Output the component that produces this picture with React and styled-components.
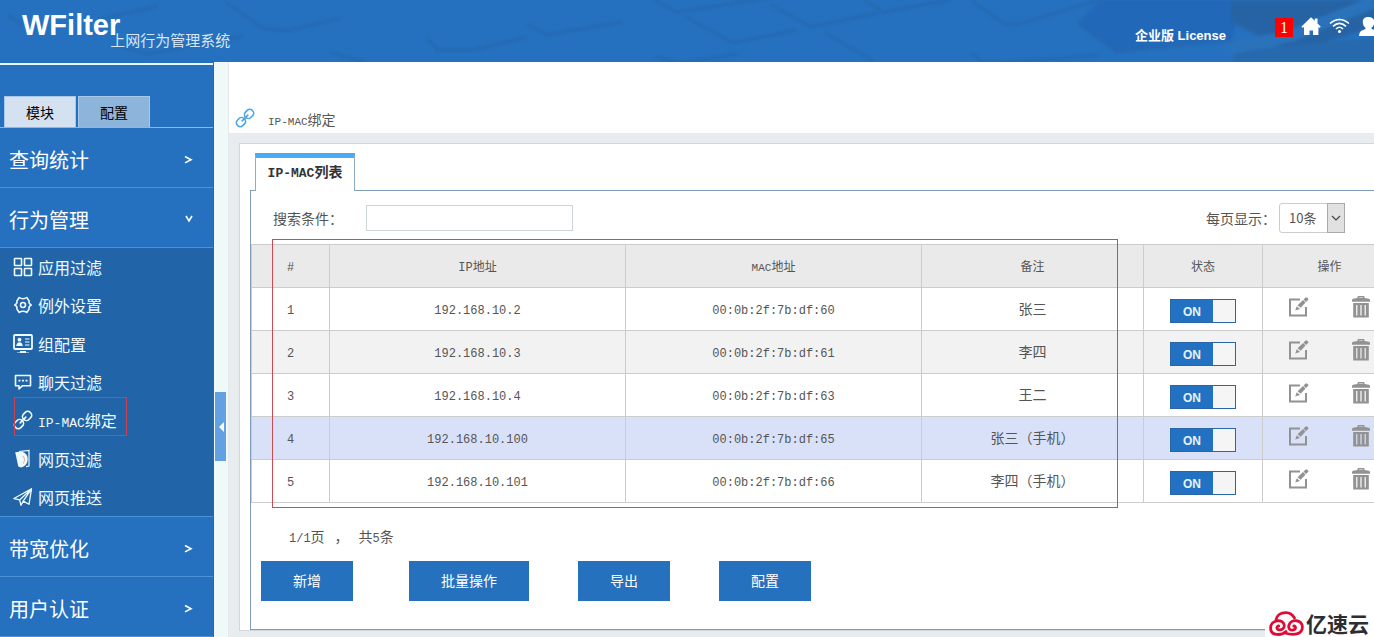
import React from "react";
import styled, { createGlobalStyle } from "styled-components";

const GlobalStyle = createGlobalStyle`
  *, *::before, *::after { box-sizing: border-box; }
  body {
    margin: 0;
    overflow-x: hidden;
    background: #e9ecef;
    color: #555;
    font-family: "Noto Sans CJK SC", sans-serif;
    font-size: 14px;
    line-height: 20px;
  }
  button, input, select { font: inherit; color: inherit; }
  svg { display: block; flex: none; }
`;

/* The console is slightly wider than the window; the excess is clipped. */
const Clip = styled.div`
  position: relative;
  overflow: hidden;
`;

const Page = styled.div`
  display: flex;
  flex-direction: column;
  width: calc(100% + 35px);
  min-height: 100vh;
`;

const Latin = styled.span`
  font-family: "Liberation Mono", monospace;
  font-size: ${(p) => p.$size || 12}px;
  line-height: 1;
`;

/* ---------- header ---------- */

const Header = styled.header`
  position: relative;
  display: flex;
  justify-content: space-between;
  height: 62px;
  background: #2571bf;
  overflow: hidden;
  color: #fff;
`;

const HeaderArt = styled.svg`
  position: absolute;
  top: 0;
  left: 0;
`;

const Brand = styled.div`
  position: relative;
  display: flex;
  padding-left: 22px;
`;

const BrandName = styled.h1`
  margin: 0;
  padding-top: 9px;
  font: bold 29px/32px "Liberation Sans", sans-serif;
`;

const BrandNote = styled.span`
  margin-left: -10px;
  padding-top: 30px;
  font-size: 15px;
  color: #d5e6f7;
`;

const HeaderTools = styled.nav`
  position: relative;
  display: flex;
  align-items: flex-start;
  gap: 8px;
  padding: 17px 30px 0 0;

  a { color: #fff; }
`;

const License = styled.a`
  margin: 9px 41px 0 0;
  font: bold 13px/20px "Liberation Sans", "Noto Sans CJK SC", sans-serif;
  text-decoration: none;
`;

const Badge = styled.span`
  width: 18px;
  margin-top: 1px;
  background: #f00;
  text-align: center;
  font: 16px/19px "Liberation Serif", serif;
`;

/* ---------- sidebar ---------- */

const Body = styled.div`
  display: flex;
  flex: 1;
`;

const Sidebar = styled.aside`
  display: flex;
  flex-direction: column;
  flex: none;
  width: 214px;
  background: #2571bf;
  border-right: 1px solid #2067b4;
  color: #fff;
`;

const SideTabs = styled.div`
  display: flex;
  align-items: flex-end;
  gap: 2px;
  height: 65px;
  margin-top: 1px;
  padding-left: 4px;
  border-top: 2px solid #eaf7ff;
  border-bottom: 1px solid #86b9ea;
`;

const SideTab = styled.button`
  width: 72px;
  height: 31px;
  padding: 0;
  border: 1px solid #a9c8e5;
  border-bottom: 0;
  background: ${(p) => (p.$active ? "#d3e1f0" : "#8db4da")};
  color: #000;
`;

const Group = styled.button`
  display: flex;
  align-items: center;
  justify-content: space-between;
  height: 60px;
  padding: 4px 20px 0 9px;
  border: 0;
  border-bottom: 1px solid #4c92d7;
  background: #2571bf;
  color: #fff;
  font-size: 20px;
  line-height: 28px;
`;

const Submenu = styled.ul`
  display: grid;
  grid-auto-rows: 1fr;
  min-height: 269px;
  margin: 0;
  padding: 0;
  border-bottom: 1px solid #4c92d7;
  background: #2165a8;
  list-style: none;
`;

const MenuItem = styled.li`
  position: relative;
`;

const MenuLink = styled.a`
  display: flex;
  align-items: center;
  gap: 5px;
  height: 100%;
  padding: 0 0 0 13px;
  color: #effaff;
  font-size: 16px;
  text-decoration: none;
`;

const MenuMark = styled.span`
  position: absolute;
  inset: -4px 86px 3px 14px;
  border: 1px solid #cf3f52;
  pointer-events: none;
`;

const Gutter = styled.div`
  display: flex;
  flex: none;
  width: 15px;
  padding: 330px 0 0 1px;
  background: #eff9f7;
  border-right: 1px solid #e2eaed;
`;

const Collapse = styled.button`
  display: flex;
  align-items: center;
  justify-content: flex-end;
  width: 11px;
  height: 69px;
  padding: 0 2px 0 0;
  border: 0;
  background: #64a1e2;
`;

/* ---------- content ---------- */

const Main = styled.main`
  flex: 1;
  min-width: 0;
  background: #e9ecef;
`;

const TitleBar = styled.div`
  display: flex;
  align-items: flex-end;
  gap: 13px;
  height: 71px;
  padding: 0 0 5px 6px;
  background: #fff;
`;

const Title = styled.h2`
  margin: 0;
  font-size: 14px;
  line-height: 16px;
  font-weight: 400;
`;

const Card = styled.section`
  margin: 10px 0 0 10px;
  padding: 9px 10px 0;
  border: 1px solid #cfd6dd;
  background: #fff;
`;

const CardTab = styled.button`
  position: relative;
  display: block;
  width: 100px;
  height: 38px;
  margin: 0 0 -1px 5px;
  padding: 0 0 8px;
  border: 1px solid #8fabc6;
  border-top: 5px solid #4aabf3;
  border-bottom: 0;
  background: #fff;
  color: #333;
  font-weight: 700;
`;

const Panel = styled.div`
  padding-bottom: 28px;
  border: 1px solid #7e9db9;
`;

const Filters = styled.div`
  display: flex;
  align-items: center;
  justify-content: space-between;
  height: 53px;
  padding: 0 52px 0 22px;
`;

const Field = styled.div`
  display: flex;
  align-items: center;
`;

const SearchLabel = styled.label`
  width: 93px;
`;

const SearchInput = styled.input`
  width: 207px;
  height: 26px;
  border: 1px solid #ccd6d8;
  background: #fff;
`;

const SelectBox = styled.div`
  position: relative;
  margin-left: 3px;
`;

const Select = styled.select`
  appearance: none;
  display: block;
  width: 66px;
  height: 30px;
  padding: 0 18px 0 9px;
  border: 1px solid #ccc;
  border-radius: 3px;
  background: #fff;
  font-size: 13px;
`;

const SelectArrow = styled.span`
  position: absolute;
  inset: 0 0 0 auto;
  display: grid;
  place-items: center;
  width: 18px;
  border: 1px solid #a9a9a9;
  background: #e1e1e1;
  pointer-events: none;
`;

const TableWrap = styled.div`
  position: relative;
`;

const TableMark = styled.span`
  position: absolute;
  inset: -5px 279px -5px 21px;
  border: 1px solid #cf4a52;
  pointer-events: none;
`;

const Table = styled.table`
  width: 100%;
  table-layout: fixed;
  border-collapse: separate;
  border-spacing: 0;
  border-top: 1px solid #ccc;
  border-left: 1px solid #ccc;
`;

const Th = styled.th`
  width: ${(p) => (p.$w ? `${p.$w}px` : "auto")};
  height: 43px;
  padding: 0;
  border-right: 1px solid #ccc;
  border-bottom: 1px solid #ccc;
  background: #eaeaea;
  font-size: 12px;
  font-weight: 400;
`;

const Row = styled.tr`
  background: ${(p) => (p.$selected ? "#d9e1f9" : "#fff")};
  &:nth-child(even) {
    background: ${(p) => (p.$selected ? "#d9e1f9" : "#f2f2f2")};
  }
`;

const Td = styled.td`
  height: 43px;
  padding: 0 0 2px;
  border-right: 1px solid #ccc;
  border-bottom: 1px solid #ccc;
  text-align: center;
`;

const Toggle = styled.label`
  display: flex;
  width: 66px;
  height: 24px;
  margin: 5px auto 0;
  border: 1px solid #2a66a5;
  background: #f5f5f5;
`;

const ToggleInput = styled.input`
  position: absolute;
  width: 1px;
  height: 1px;
  margin: 0;
  opacity: 0;
`;

const ToggleText = styled.span`
  width: 42px;
  background: #2371c2;
  color: #e8f2fc;
  font: bold 12px/24px "Liberation Sans", sans-serif;
`;

const Actions = styled.div`
  display: flex;
  justify-content: center;
  gap: 43px;
  margin-top: -3px;
`;

const IconButton = styled.button`
  padding: 0;
  border: 0;
  background: none;
  color: #929292;
`;

const Pager = styled.p`
  display: flex;
  gap: 10px;
  height: 58px;
  margin: 0;
  padding: 23px 0 0 38px;
`;

const Buttons = styled.div`
  display: grid;
  grid-template-columns: 148px 169px 141px auto;
  justify-items: start;
  padding-left: 10px;
`;

const Button = styled.button`
  min-width: 92px;
  height: 40px;
  padding: 0 32px 2px;
  border: 0;
  background: #2571bd;
  color: #fff;
`;

const Watermark = styled.div`
  position: absolute;
  right: 0;
  bottom: 0;
  display: flex;
  align-items: center;
  gap: 2px;
  width: 109px;
  height: 30px;
  padding: 2px 0 0 4px;
  background: #fff;
  color: #2c2e33;
  font-size: 21px;
  font-weight: 700;
  line-height: 24px;
  white-space: nowrap;
`;

/* ---------- drawings ---------- */

const LinkIcon = ({ color = "currentColor", size = 20 }) => (
  <svg width={size} height={size} viewBox="0 0 20 20" fill="none" stroke={color} strokeWidth="1.6" strokeLinecap="round">
    <g transform="rotate(-45 10 10)">
      <rect x="-.5" y="6.2" width="9.500" height="7.600" rx="3.500" />
      <rect x="11" y="6.2" width="9.500" height="7.600" rx="3.500" />
      <path d="M6 10h8" />
    </g>
  </svg>
);

const menuIcons = {
  apps: (
    <svg width="20" height="20" viewBox="0 0 20 20" fill="none" stroke="currentColor" strokeWidth="1.6">
      <rect x="1.500" y="1.500" width="7" height="7" rx=".5" />
      <rect x="11.500" y="1.500" width="7" height="7" rx=".5" />
      <rect x="1.500" y="11.500" width="7" height="7" rx=".5" />
      <rect x="11.500" y="11.500" width="7" height="7" rx=".5" />
    </svg>
  ),
  gear: (
    <svg width="20" height="20" viewBox="0 0 20 20" fill="none" stroke="currentColor" strokeWidth="1.5" strokeLinejoin="round">
      <path d="M6.2 2.500Q10 5.100 13.800 2.500L16.100 6Q15.400 8.700 18.300 10 15.400 11.300 16.100 14L13.800 17.500Q10 14.900 6.200 17.500L3.900 14Q4.600 11.300 1.700 10 4.600 8.700 3.900 6Z" />
      <circle cx="10" cy="10" r="2.500" />
    </svg>
  ),
  group: (
    <svg width="20" height="20" viewBox="0 0 20 20" fill="none" stroke="currentColor">
      <rect x="1" y="1" width="18" height="14" rx="1" strokeWidth="1.8" />
      <circle cx="6.500" cy="5.700" r="1.900" fill="currentColor" stroke="none" />
      <path d="M3.200 12Q3.700 8.200 6.500 8.200 9.400 8.200 9.800 12Z" fill="currentColor" stroke="none" />
      <path d="M12 5h4.500M12 8h4.500M12 11h4.500" strokeWidth="1.200" />
      <path d="M7 18h6" strokeWidth="2" />
      <path d="M4 18.500h12" strokeWidth="1" opacity=".5" />
    </svg>
  ),
  chat: (
    <svg width="20" height="20" viewBox="0 0 20 20" fill="none" stroke="currentColor" strokeWidth="1.6" strokeLinejoin="round">
      <path d="M2.500 3.500h15v10.200H9.600L6 17v-3.300H2.500Z" />
      <path d="M5.500 8.600h2M9 8.600h2M12.500 8.600h2" strokeWidth="1.800" />
    </svg>
  ),
  link: <LinkIcon />,
  page: (
    <svg width="20" height="20" viewBox="0 0 20 20" fill="none" stroke="currentColor" strokeWidth="1.200">
      <path d="M6 2.500 16 1.500V17l-3 .7" />
      <path d="M2.200 3.200 9 2.400Q15.500 5 14.700 11 14 17 8 18.600L5.300 17.400Z" fill="currentColor" stroke="none" />
      <path d="M9.500 7Q13.500 10 10 14.500" stroke="#e3bfae" />
    </svg>
  ),
  send: (
    <svg width="20" height="20" viewBox="0 0 20 20" fill="none" stroke="currentColor" strokeWidth="1.300" strokeLinejoin="round">
      <path d="M18.500 1.800.9 11.500l5.700 1.400ZM18.500 1.800 16 17.300l-5.800-3.200ZM6.600 12.900 8 18.300l2.200-4.200L18.500 1.800" />
    </svg>
  ),
};

const Chevron = ({ down }) => (
  <svg width="10" height="10" viewBox="0 0 10 10" fill="none" stroke="currentColor" strokeWidth="1.600">
    <path d={down ? "M3 1 6 6 9 1" : "m2 1.500 6 3.200-6 3.200"} />
  </svg>
);

const HomeIcon = () => (
  <svg width="20" height="20" viewBox="0 0 20 20" fill="currentColor">
    <path d="M10 .3 13.800 3.800V1.600h2.700v4.800L19.800 9.800l-1.200 1-1.200-.5V18h-5.400v-4.500H8.500V18H3v-7.700l-1.400.5-1.300-1Z" />
  </svg>
);

const WifiIcon = () => (
  <svg width="21" height="20" viewBox="0 0 21 20" fill="none" stroke="currentColor" strokeWidth="1.600">
    <path d="M1 6.500Q10.500-1.500 20 6.500M4 9.300Q10.500 3.500 17 9.300M7 12Q10.500 8.500 14 12" />
    <circle cx="10.500" cy="14.500" r="1.600" fill="currentColor" stroke="none" />
  </svg>
);

const UserIcon = () => (
  <svg width="21" height="20" viewBox="0 0 21 20" fill="currentColor">
    <path d="M10.500 0c4.400 0 6 2.400 5.700 5.700-.2 2.200-1.200 3.800-2.700 5v1.300l5 1.700Q20.800 15 21 19H1q.2-4 2.500-5.300l4-1.700v-1.300C6 9.500 5 7.900 4.800 5.700 4.500 2.400 6.100 0 10.500 0Z" />
  </svg>
);

const EditIcon = () => (
  <svg width="20" height="20" viewBox="0 0 20 20" fill="currentColor">
    <path d="M0 1.500h11v2H2v14h14V10h2v9.500H0Z" />
    <path d="m6.200 13.600 1.600-4.300 3.200 2.600ZM8.600 8.300 14 3l2.500 2.600-4.800 5.200ZM14.500 2.500 17 .2q1 0 1.600.7.800.7.900 1.700L17 5Z" />
  </svg>
);

const TrashIcon = () => (
  <svg width="18" height="22" viewBox="0 0 18 22" fill="currentColor">
    <path d="M5.500 2V.8Q5.500 0 6.500 0h5q1 0 1 .8V2l4.500.8q1 .2 1 1.700v1.300H0V4.500Q0 3 1 2.800ZM7 1.500V2h4v-.5Z" />
    <path fillRule="evenodd" d="M1.200 7h15.600v14.500H1.200ZM4.200 9v10.500h1.200V9Zm4.200 0v10.500h1.200V9Zm4.200 0v10.500h1.200V9Z" />
  </svg>
);

const CloudIcon = () => (
  <svg width="35" height="25" viewBox="0 0 35 25" fill="none" stroke="#df0b36" strokeWidth="2.800" strokeLinecap="round">
    <path d="M7 9C7.500 4.500 11.500 1.600 17 1.600q5.500 0 8.500 5.400" />
    <path d="M17 20.500C13 24.500 1.600 25.500 1.600 17 1.600 8.500 14 7.500 15.200 14 15.700 17.500 12.500 19.200 10 18.800 7 18.200 7.500 14.800 9.800 15" />
    <path d="M16 22C24 24.500 33.400 24 33.400 16 33.400 8.500 22 7.500 20 14 18.800 18 21.500 19.400 24 19 27.500 18.200 27 14.800 24.800 15" />
  </svg>
);

const KeyboardArt = () => (
  <HeaderArt width="1408" height="62" viewBox="0 0 1408 62" aria-hidden="true">
    <defs>
      <filter id="soft" x="-5%" y="-20%" width="110%" height="140%">
        <feGaussianBlur stdDeviation="1.500" />
      </filter>
    </defs>
    <g filter="url(#soft)">
      <path d="M1078 23 1117 52 1233 38 1240 0H1100Z" fill="#2067b8" />
      <path d="M1231 0v22l60 30 83-24 34-10V0Z" fill="#2864a5" />
      <path d="M1234 52 1408 34v28h-174Z" fill="#2869ad" />
      <path d="m1231 48 60-12 83-34" fill="none" stroke="#2b72ba" strokeWidth="12" />
      <g fill="none" stroke="#2367ae" strokeWidth="4" opacity=".6">
        <path d="m427 38 11 12h35l54-13" />
        <path d="m527 24 19 11 77-13" />
        <path d="m654 0 23 12 93-14" />
        <path d="m686 17 47 26 64-13" />
        <path d="m770 4 41 23 67-14" />
        <path d="m864 0 20 12 67-12" />
        <path d="m971 0 33 24h15l83-25" />
        <path d="m824 32 50 29M654 56l25 7 60-9M971 53l15 11 114-9" />
        <path d="m226 2 36 26 25 3 54-13M8 15l14 10M100 19l59-13M117 46l32 8 94-18M330 52l33 10" />
        <path d="m1078 23 39 29 116-12" />
      </g>
    </g>
  </HeaderArt>
);

/* ---------- data ---------- */

const menu = [
  { icon: "apps", text: "应用过滤" },
  { icon: "gear", text: "例外设置" },
  { icon: "group", text: "组配置" },
  { icon: "chat", text: "聊天过滤" },
  { icon: "link", latin: "IP-MAC", text: "绑定", marked: true },
  { icon: "page", text: "网页过滤" },
  { icon: "send", text: "网页推送" },
];

const rows = [
  { ip: "192.168.10.2", mac: "00:0b:2f:7b:df:60", note: "张三" },
  { ip: "192.168.10.3", mac: "00:0b:2f:7b:df:61", note: "李四" },
  { ip: "192.168.10.4", mac: "00:0b:2f:7b:df:63", note: "王二" },
  { ip: "192.168.10.100", mac: "00:0b:2f:7b:df:65", note: "张三（手机）", selected: true },
  { ip: "192.168.10.101", mac: "00:0b:2f:7b:df:66", note: "李四（手机）" },
];

export default function App() {
  return (
    <Clip>
      <GlobalStyle />
      <Page>
        <Header>
          <KeyboardArt />
          <Brand>
            <BrandName>WFilter</BrandName>
            <BrandNote>上网行为管理系统</BrandNote>
          </Brand>
          <HeaderTools>
            <License href="#license">企业版 License</License>
            <Badge>1</Badge>
            <a href="#home" aria-label="首页"><HomeIcon /></a>
            <a href="#network" aria-label="网络"><WifiIcon /></a>
            <a href="#user" aria-label="用户"><UserIcon /></a>
          </HeaderTools>
        </Header>

        <Body>
          <Sidebar>
            <SideTabs>
              <SideTab $active>模块</SideTab>
              <SideTab>配置</SideTab>
            </SideTabs>
            <Group>查询统计<Chevron /></Group>
            <Group>行为管理<Chevron down /></Group>
            <Submenu>
              {menu.map((m) => (
                <MenuItem key={m.icon}>
                  <MenuLink href={`#${m.icon}`}>
                    {menuIcons[m.icon]}
                    <span>
                      {m.latin && <Latin $size={13}>{m.latin}</Latin>}
                      {m.text}
                    </span>
                  </MenuLink>
                  {m.marked && <MenuMark />}
                </MenuItem>
              ))}
            </Submenu>
            <Group>带宽优化<Chevron /></Group>
            <Group>用户认证<Chevron /></Group>
          </Sidebar>

          <Gutter>
            <Collapse aria-label="收起菜单">
              <svg width="5" height="10" viewBox="0 0 5 10" fill="#fff"><path d="M5 0v10L0 5Z" /></svg>
            </Collapse>
          </Gutter>

          <Main>
            <TitleBar>
              <LinkIcon color="#4ba6e6" />
              <Title><Latin $size={11}>IP-MAC</Latin>绑定</Title>
            </TitleBar>
            <Card>
              <CardTab><Latin $size={13}>IP-MAC</Latin>列表</CardTab>
              <Panel>
                <Filters>
                  <Field>
                    <SearchLabel htmlFor="search">搜索条件：</SearchLabel>
                    <SearchInput id="search" type="text" />
                  </Field>
                  <Field>
                    <label htmlFor="size">每页显示：</label>
                    <SelectBox>
                      <Select id="size" defaultValue="10">
                        <option value="10">10条</option>
                      </Select>
                      <SelectArrow>
                        <svg width="10" height="6" viewBox="0 0 10 6" fill="none" stroke="#444" strokeWidth="1.200"><path d="m1 1 4 4 4-4" /></svg>
                      </SelectArrow>
                    </SelectBox>
                  </Field>
                </Filters>

                <TableWrap>
                  <Table>
                    <thead>
                      <tr>
                        <Th $w={78}><Latin>#</Latin></Th>
                        <Th><Latin>IP</Latin>地址</Th>
                        <Th><Latin $size={11}>MAC</Latin>地址</Th>
                        <Th $w={222}>备注</Th>
                        <Th $w={119}>状态</Th>
                        <Th $w={134}>操作</Th>
                      </tr>
                    </thead>
                    <tbody>
                      {rows.map((r, i) => (
                        <Row key={r.mac} $selected={r.selected}>
                          <Td><Latin>{i + 1}</Latin></Td>
                          <Td><Latin>{r.ip}</Latin></Td>
                          <Td><Latin>{r.mac}</Latin></Td>
                          <Td>{r.note}</Td>
                          <Td>
                            <Toggle>
                              <ToggleInput type="checkbox" defaultChecked />
                              <ToggleText>ON</ToggleText>
                            </Toggle>
                          </Td>
                          <Td>
                            <Actions>
                              <IconButton aria-label="编辑"><EditIcon /></IconButton>
                              <IconButton aria-label="删除"><TrashIcon /></IconButton>
                            </Actions>
                          </Td>
                        </Row>
                      ))}
                    </tbody>
                  </Table>
                  <TableMark />
                </TableWrap>

                <Pager>
                  <span><Latin>1/1</Latin>页</span>
                  <span>，</span>
                  <span>共<Latin>5</Latin>条</span>
                </Pager>
                <Buttons>
                  <Button>新增</Button>
                  <Button>批量操作</Button>
                  <Button>导出</Button>
                  <Button>配置</Button>
                </Buttons>
              </Panel>
            </Card>
          </Main>
        </Body>
      </Page>
      <Watermark>
        <CloudIcon />
        亿速云
      </Watermark>
    </Clip>
  );
}
